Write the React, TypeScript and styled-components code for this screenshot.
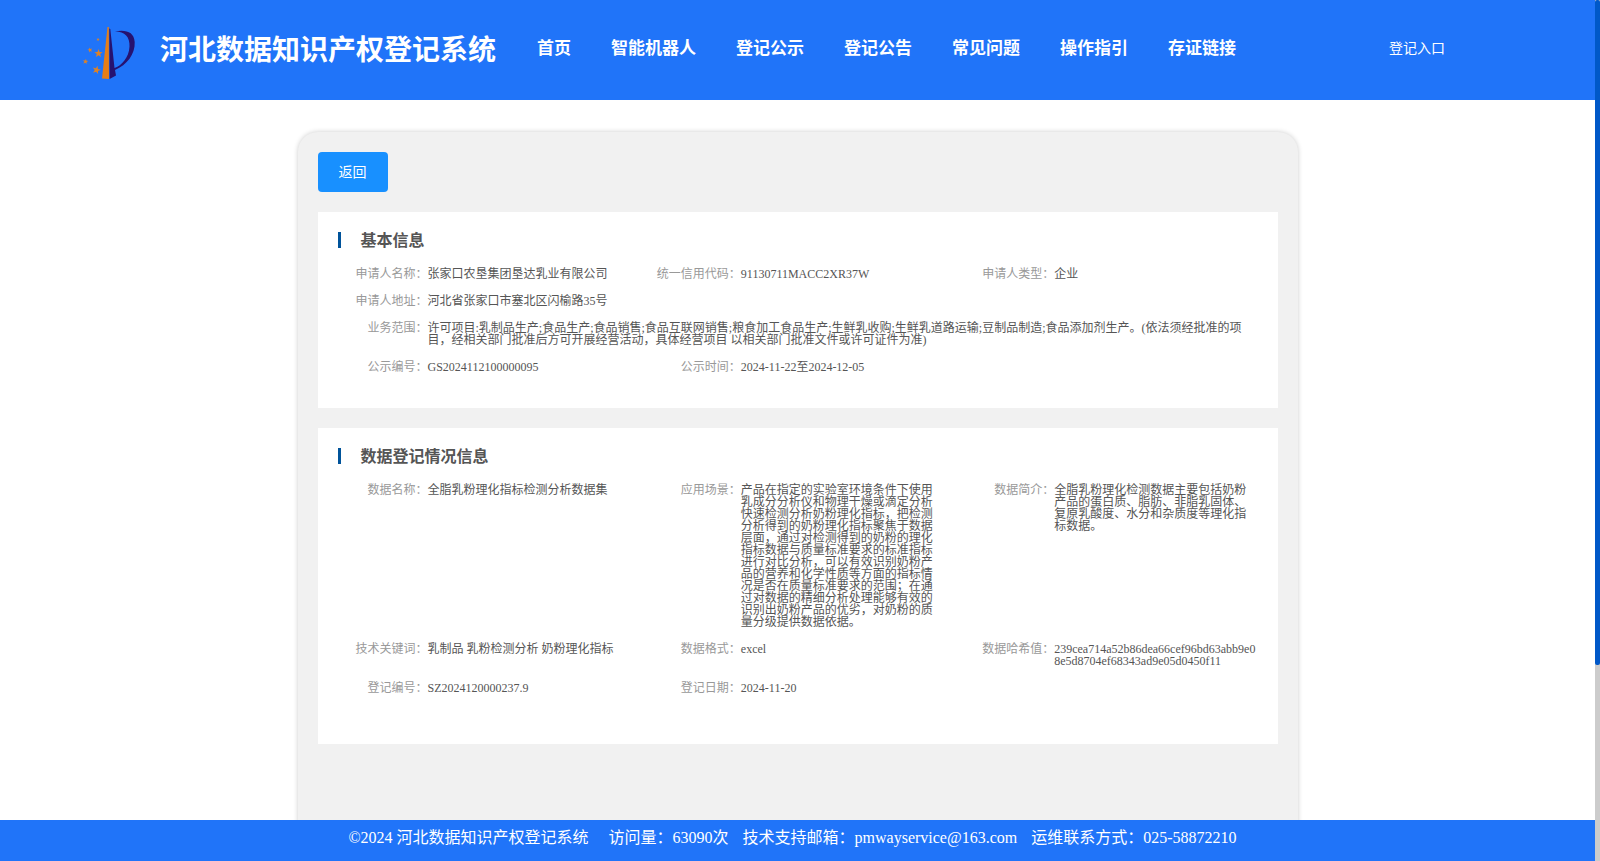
import React from "react";
import styled, { createGlobalStyle } from "styled-components";

const GlobalStyle = createGlobalStyle`
  * { box-sizing: border-box; margin: 0; padding: 0; }
  html { scrollbar-width: none; }
  body {
    font-family: "Liberation Serif", "Noto Sans CJK SC", serif;
    font-size: 12px;
    line-height: 1;
    color: #555;
    background: #fff;
  }
`;

const Page = styled.div`
  min-height: 100vh;
  padding-right: 5px;
`;

const Header = styled.header`
  display: flex;
  align-items: center;
  height: 100px;
  padding: 2px 150px 0 80px;
  background: #2074f9;
  color: #fff;
`;

const Logo = styled.svg`
  flex: none;
  width: 60px;
  height: 60px;
  margin-top: 6px;
`;

const SiteTitle = styled.h1`
  margin-left: 20px;
  font-size: 28px;
  line-height: 32px;
  white-space: nowrap;
`;

const Nav = styled.nav`
  display: flex;
  gap: 40px;
  margin: 0 auto 4px 41px;
`;

const NavLink = styled.a`
  color: #fff;
  font-size: 17px;
  font-weight: bold;
  line-height: 20px;
  text-decoration: none;
  white-space: nowrap;
`;

const EntryLink = styled(NavLink)`
  margin-bottom: 4px;
  font-size: 14px;
  font-weight: normal;
`;

const Panel = styled.main`
  max-width: 1000px;
  min-height: 860px;
  margin: 32px auto 122px;
  padding: 20px;
  border-radius: 20px;
  background: #f1f1f1;
  box-shadow: 0 0 5px #ccc;
`;

const BackButton = styled.button`
  display: block;
  width: 70px;
  height: 40px;
  padding-bottom: 2px;
  border: 0;
  border-radius: 4px;
  background: #1890ff;
  color: #fff;
  font-family: inherit;
  font-size: 14px;
  cursor: pointer;
`;

const Card = styled.section<{ $bottom: number }>`
  margin-top: 20px;
  padding: 20px 0 ${(p) => p.$bottom}px 20px;
  background: #fff;
`;

const CardTitle = styled.h2`
  margin-bottom: 20px;
  padding-left: 20px;
  border-left: 3px solid #00539a;
  height: 16px;
  font-size: 16px;
  line-height: 18px;
`;

const Fields = styled.dl`
  display: grid;
  grid-template-columns: repeat(3, 1fr);
  row-gap: 15px;
`;

const Field = styled.div<{ $wide?: boolean }>`
  display: grid;
  grid-template-columns: 90px minmax(0, 1fr);
  grid-column: ${(p) => (p.$wide ? "1 / -1" : "auto")};
  padding-right: ${(p) => (p.$wide ? 30 : 20)}px;
`;

const Label = styled.dt`
  color: #999;
  text-align: right;
`;

const Value = styled.dd`
  word-break: break-all;
`;

const Footer = styled.footer`
  position: fixed;
  left: 0;
  right: 5px;
  bottom: 0;
  height: 41px;
  padding-top: 8px;
  background: #2074f9;
  color: #fff;
  font-size: 16px;
  line-height: 20px;
  text-align: center;
`;

const FooterItem = styled.span<{ $gap: number }>`
  margin-right: ${(p) => p.$gap}px;
`;

const ScrollTrack = styled.div`
  position: fixed;
  top: 0;
  right: 0;
  bottom: 0;
  width: 5px;
  background: #ccc;
`;

const ScrollThumb = styled.div`
  height: 77.2%;
  border-radius: 2px;
  background: #0058c8;
`;

const navItems = ["首页", "智能机器人", "登记公示", "登记公告", "常见问题", "操作指引", "存证链接"];

type Item = { label: string; value: string; wide?: boolean };

const basicInfo: Item[] = [
  { label: "申请人名称", value: "张家口农垦集团垦达乳业有限公司" },
  { label: "统一信用代码", value: "91130711MACC2XR37W" },
  { label: "申请人类型", value: "企业" },
  { label: "申请人地址", value: "河北省张家口市塞北区闪榆路35号", wide: true },
  {
    label: "业务范围",
    value:
      "许可项目:乳制品生产;食品生产;食品销售;食品互联网销售;粮食加工食品生产;生鲜乳收购;生鲜乳道路运输;豆制品制造;食品添加剂生产。(依法须经批准的项目，经相关部门批准后方可开展经营活动，具体经营项目 以相关部门批准文件或许可证件为准)",
    wide: true,
  },
  { label: "公示编号", value: "GS2024112100000095" },
  { label: "公示时间", value: "2024-11-22至2024-12-05" },
];

const dataInfo: Item[] = [
  { label: "数据名称", value: "全脂乳粉理化指标检测分析数据集" },
  {
    label: "应用场景",
    value:
      "产品在指定的实验室环境条件下使用乳成分分析仪和物理干燥或滴定分析快速检测分析奶粉理化指标，把检测分析得到的奶粉理化指标聚焦于数据层面，通过对检测得到的奶粉的理化指标数据与质量标准要求的标准指标进行对比分析，可以有效识别奶粉产品的营养和化学性质等方面的指标情况是否在质量标准要求的范围；在通过对数据的精细分析处理能够有效的识别出奶粉产品的优劣，对奶粉的质量分级提供数据依据。",
  },
  {
    label: "数据简介",
    value: "全脂乳粉理化检测数据主要包括奶粉产品的蛋白质、脂肪、非脂乳固体、复原乳酸度、水分和杂质度等理化指标数据。",
  },
  { label: "技术关键词", value: "乳制品 乳粉检测分析 奶粉理化指标" },
  { label: "数据格式", value: "excel" },
  { label: "数据哈希值", value: "239cea714a52b86dea66cef96bd63abb9e08e5d8704ef68343ad9e05d0450f11" },
  { label: "登记编号", value: "SZ2024120000237.9" },
  { label: "登记日期", value: "2024-11-20" },
];

const STAR = "M0-10 2.4-3.2 9.5-3.1 3.8 1.2 5.9 8.1 0 4-5.9 8.1-3.8 1.2-9.5-3.1-2.4-3.2Z";

const stars = [
  { x: 28, y: 19.5, s: 0.18, r: 10 },
  { x: 20, y: 30, s: 0.26, r: -15 },
  { x: 28.5, y: 33.5, s: 0.44, r: 0 },
  { x: 15.5, y: 41.5, s: 0.29, r: 10 },
  { x: 26.5, y: 50, s: 0.44, r: 15 },
];

function LogoMark() {
  return (
    <Logo viewBox="10 4 60 60" aria-hidden="true">
      <path d="M37.5 7 38.8 7 39 59 32 58.5Z" fill="#e67e17" />
      <path
        d="M39.3 8.5 40.3 9 44.5 48C51 46 59 38 59.5 26.5C60 17 55 11.5 45 11.5C56 9.5 64 12 64.7 22C65.300 34 57 45 45 50L46 55.500 39.600 59Z"
        fill="#261270"
      />
      {stars.map((s, i) => (
        <path key={i} d={STAR} fill="#dd8227" transform={`translate(${s.x} ${s.y}) rotate(${s.r}) scale(${s.s})`} />
      ))}
    </Logo>
  );
}

function InfoCard({ title, items, bottom }: { title: string; items: Item[]; bottom: number }) {
  return (
    <Card $bottom={bottom}>
      <CardTitle>{title}</CardTitle>
      <Fields>
        {items.map((item) => (
          <Field key={item.label} $wide={item.wide}>
            <Label>{item.label}：</Label>
            <Value>{item.value}</Value>
          </Field>
        ))}
      </Fields>
    </Card>
  );
}

export default function App() {
  return (
    <Page>
      <GlobalStyle />
      <Header>
        <LogoMark />
        <SiteTitle>河北数据知识产权登记系统</SiteTitle>
        <Nav>
          {navItems.map((item) => (
            <NavLink key={item} href="#">
              {item}
            </NavLink>
          ))}
        </Nav>
        <EntryLink href="#">登记入口</EntryLink>
      </Header>
      <Panel>
        <BackButton type="button">返回</BackButton>
        <InfoCard title="基本信息" items={basicInfo} bottom={35} />
        <InfoCard title="数据登记情况信息" items={dataInfo} bottom={50} />
      </Panel>
      <Footer>
        <FooterItem $gap={20}>©2024 河北数据知识产权登记系统</FooterItem>
        <FooterItem $gap={10}>访问量：63090次</FooterItem>{" "}
        <FooterItem $gap={10}>技术支持邮箱：pmwayservice@163.com</FooterItem>{" "}
        <FooterItem $gap={10}>运维联系方式：025-58872210</FooterItem>
      </Footer>
      <ScrollTrack>
        <ScrollThumb />
      </ScrollTrack>
    </Page>
  );
}
